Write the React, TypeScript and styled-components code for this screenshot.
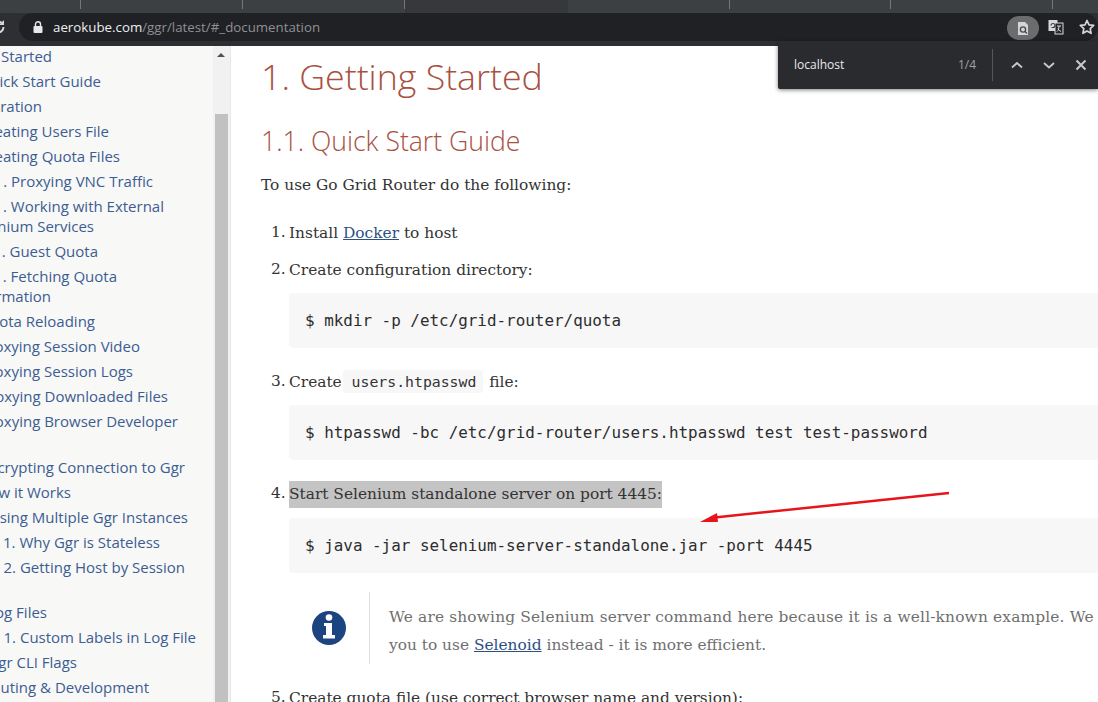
import React from 'react'
import styled, { createGlobalStyle } from 'styled-components'

const GlobalStyle = createGlobalStyle`
  html, body {
    margin: 0;
    height: 100%;
    overflow: hidden;
    background: #fff;
  }
`

const Page = styled.div`
  position: relative;
  width: 1098px;
  height: 702px;
  overflow: hidden;
  display: flex;
  flex-direction: column;
`

const TabStrip = styled.div`
  height: 13px;
  background: #3d4043;
  display: flex;
`

const TabSlot = styled.div<{ $w: number; $active?: boolean }>`
  width: ${p => p.$w}px;
  flex: none;
  box-sizing: border-box;
  background: ${p => (p.$active ? '#36383b' : 'transparent')};
  border-right: 1px solid ${p => (p.$active ? 'transparent' : '#74767a')};
  height: ${p => (p.$active ? 13 : 9)}px;
`

const Toolbar = styled.div`
  height: 33px;
  background: #2e2f32;
  position: relative;
  display: flex;
  align-items: flex-start;
`

const ReloadClip = styled.div`
  width: 6px;
  height: 28px;
  overflow: hidden;
  display: flex;
  align-items: center;
  color: #d6d7d9;
  flex: none;
`

const UrlPill = styled.div`
  margin-left: 13px;
  width: 1096px;
  height: 28px;
  border-radius: 14px;
  background: #202124;
  display: flex;
  align-items: center;
  padding-left: 14px;
  font: 13.3px 'Open Sans', sans-serif;
  color: #8e9094;
`

const Host = styled.span`
  color: #eceef0;
  margin-left: 10px;
`

const ToolIcons = styled.div`
  position: absolute;
  top: 0;
  right: 0;
  height: 28px;
  display: flex;
  align-items: center;
  gap: 9px;
  padding-right: 3px;
`

const PagePill = styled.div`
  width: 32px;
  height: 24px;
  margin-top: 2px;
  border-radius: 12px;
  background: #6a6c6e;
  display: flex;
  align-items: center;
  justify-content: center;
`

const Main = styled.div`
  flex: 1;
  display: flex;
  min-height: 0;
`

const Sidebar = styled.nav`
  width: 213px;
  flex: none;
  background: #f8f8f7;
  overflow: hidden;
  font: 15px/20px 'Open Sans', sans-serif;
  color: #3c5d92;
`

// the nav is scrolled sideways in the picture, so rows are cut on their left
const TocRow = styled.div<{ $end: number; $gap?: number }>`
  width: ${p => p.$end}px;
  display: flex;
  justify-content: flex-end;
  overflow: hidden;
  margin-bottom: ${p => p.$gap ?? 5}px;
  white-space: nowrap;
`

const ScrollTrack = styled.div`
  width: 17px;
  flex: none;
  background: #f1f1f1;
  position: relative;
`

const ScrollArrow = styled.div`
  position: absolute;
  top: 7px;
  left: 4px;
  border-left: 4px solid transparent;
  border-right: 4px solid transparent;
  border-bottom: 4px solid #505050;
`

const ScrollThumb = styled.div`
  position: absolute;
  top: 68px;
  left: 2px;
  right: 2px;
  bottom: 0;
  background: #c1c1c1;
`

const Content = styled.main`
  flex: 1;
  min-width: 0;
  border-left: 1px solid #e7e7e7;
  padding: 0 0 0 30px;
  overflow: hidden;
  font: 15.4px/25px 'DejaVu Serif', serif;
  color: #333;
`

const Title = styled.h1`
  font: 300 35.750px/44px 'Open Sans', sans-serif;
  color: #a8513f;
  margin: 8px 0 0;
`

const Subtitle = styled.h2`
  font: 300 26.600px/34px 'Open Sans', sans-serif;
  color: #a8513f;
  margin: 26px 0 0;
`

const Para = styled.p`
  margin: 15px 0 0;
  white-space: nowrap;
`

const Steps = styled.ol`
  list-style: none;
  margin: 22px 0 0;
  padding: 0;
`

const Step = styled.li<{ $gap?: number }>`
  display: grid;
  grid-template-columns: 28px 1fr;
  margin-top: ${p => p.$gap ?? 0}px;
`

const StepNo = styled.span`
  padding-left: 10px;
`

const StepBody = styled.div`
  white-space: nowrap;
  min-width: 0;
`

const StepLine = styled.div`
  line-height: 26px;
`

const Link = styled.a`
  color: #2b5082;
  text-decoration: underline;
`

const InlineCode = styled.code`
  font: 14.8px 'DejaVu Sans Mono', monospace;
  background: #f7f7f8;
  border-radius: 3px;
  padding: 3px 7px 3px 9px;
  margin: 0 1px 0 -4px;
  color: #333;
`

const Highlight = styled.span`
  display: inline-block;
  line-height: 27px;
  background: #c4c4c4;
`

const CodeBlock = styled.pre`
  margin: 10px 0 0;
  height: 55px;
  width: 860px;
  box-sizing: border-box;
  background: #f7f7f8;
  border-radius: 4px;
  padding: 0 16px;
  display: flex;
  align-items: center;
  font: 15.92px 'DejaVu Sans Mono', monospace;
  color: #2d2d2d;
`

const Note = styled.div`
  display: flex;
  margin: 19px 0 0;
  height: 72px;
`

const NoteIcon = styled.div`
  width: 80px;
  flex: none;
  display: flex;
  align-items: center;
  justify-content: center;
  border-right: 1px solid #dfdfdf;
`

const NoteText = styled.div`
  padding-left: 19px;
  padding-top: 11px;
  color: #6f6f6f;
  line-height: 28px;
  white-space: nowrap;
`

const NoteLead = styled.span`
  letter-spacing: 0.16px;
`

const FindBar = styled.div`
  position: absolute;
  top: 41px;
  right: 0;
  width: 320px;
  height: 48px;
  background: #2a2b2e;
  box-shadow: 0 1px 4px rgba(0, 0, 0, 0.5);
  display: flex;
  align-items: center;
  font: 12px 'Open Sans', sans-serif;
  color: #e8e9eb;
  border-radius: 0 0 0 2px;
`

const FindQuery = styled.span`
  margin-left: 16px;
  margin-top: -2px;
  flex: 1;
`

const FindCount = styled.span`
  color: #a0a2a5;
  margin-right: 16px;
  margin-top: -2px;
`

const FindDivider = styled.div`
  width: 1px;
  height: 32px;
  background: #55575a;
  margin-right: 15px;
`

const FindButtons = styled.div`
  display: flex;
  gap: 14px;
  margin-right: 8px;
  color: #c8c9cb;
`

const ArrowOverlay = styled.svg`
  position: absolute;
  left: 690px;
  top: 485px;
`

const tabs = [81, 162, 162, 163, 162, 161, 162]

const toc: { text: string; end: number; gap?: number }[] = [
  { text: 'Started', end: 52 },
  { text: 'ick Start Guide', end: 101 },
  { text: 'ration', end: 42 },
  { text: 'eating Users File', end: 109 },
  { text: 'eating Quota Files', end: 120 },
  { text: '. Proxying VNC Traffic', end: 153 },
  { text: '. Working with External', end: 164, gap: 0 },
  { text: 'nium Services', end: 94 },
  { text: '. Guest Quota', end: 98 },
  { text: '. Fetching Quota', end: 117, gap: 0 },
  { text: 'rmation', end: 51 },
  { text: 'ota Reloading', end: 95 },
  { text: 'oxying Session Video', end: 140 },
  { text: 'oxying Session Logs', end: 133 },
  { text: 'oxying Downloaded Files', end: 168 },
  { text: 'oxying Browser Developer', end: 178, gap: 26 },
  { text: 'crypting Connection to Ggr', end: 185 },
  { text: 'w it Works', end: 71 },
  { text: 'sing Multiple Ggr Instances', end: 188 },
  { text: '1. Why Ggr is Stateless', end: 160 },
  { text: '2. Getting Host by Session', end: 185, gap: 25 },
  { text: 'og Files', end: 47 },
  { text: '1. Custom Labels in Log File', end: 196 },
  { text: 'gr CLI Flags', end: 77 },
  { text: 'uting & Development', end: 149 },
]

const InfoIcon = () => (
  <svg width="36" height="36" viewBox="0 0 36 36">
    <circle cx="18" cy="18" r="17" fill="#1c4480" />
    <circle cx="18" cy="7.500" r="3.300" fill="#fff" />
    <path d="M13 13h8v12h3v3.500H12V25h3v-9h-2z" fill="#fff" />
  </svg>
)

export default function App() {
  return (
    <Page>
      <GlobalStyle />
      <TabStrip>
        {tabs.map((w, i) => (
          <TabSlot key={i} $w={w} $active={i === 3} />
        ))}
      </TabStrip>
      <Toolbar>
        <ReloadClip>
          <svg width="16" height="16" viewBox="0 0 16 16" style={{ marginLeft: -10, flex: 'none' }}>
            <path d="M13.500 8a5.500 5.500 0 1 1-1.600-3.900" fill="none" stroke="currentColor" strokeWidth="2" />
            <path d="M14 1v5H9z" fill="currentColor" />
          </svg>
        </ReloadClip>
        <UrlPill>
          <svg width="10" height="12" viewBox="0 0 10 12">
            <path d="M2.500 5V3.300a2.500 2.500 0 0 1 5 0V5" fill="none" stroke="#e8e8e8" strokeWidth="1.400" />
            <rect x="0.500" y="5" width="9" height="7" rx="1" fill="#e8e8e8" />
          </svg>
          <Host>aerokube.com</Host>/ggr/latest/#_documentation
        </UrlPill>
        <ToolIcons>
          <PagePill>
            <svg width="12" height="15" viewBox="0 0 12 15">
              <path d="M1 1h7l3 3v10H1z" fill="#d4d5d6" />
              <circle cx="6" cy="8.500" r="2.600" fill="none" stroke="#4a4c4f" strokeWidth="1.400" />
              <path d="M8 10.500l2 2" stroke="#4a4c4f" strokeWidth="1.400" />
            </svg>
          </PagePill>
          <svg width="16" height="16" viewBox="0 0 16 16">
            <rect x="0.500" y="1" width="9" height="11" fill="#d8d9da" />
            <rect x="7" y="4" width="8" height="11" fill="#26272a" stroke="#d8d9da" />
            <path d="M3 6.500a2 2 0 1 1 2 2H3.500" stroke="#3a3c3f" strokeWidth="1.200" fill="none" />
            <path d="M9 7h4M11 7c0 3-.8 4.500-2 5.500M9.800 9.500c.8 1.300 1.700 2.300 3.200 3" stroke="#d8d9da" fill="none" />
          </svg>
          <svg width="16" height="16" viewBox="0 0 16 16" style={{ marginLeft: 6 }}>
            <path d="M8 1.500l2 4.300 4.700.6-3.500 3.200.9 4.700L8 12l-4.100 2.300.9-4.700-3.500-3.200 4.700-.6z" fill="none" stroke="#d6d7d9" strokeWidth="1.700" strokeLinejoin="round" />
          </svg>
        </ToolIcons>
      </Toolbar>
      <Main>
        <Sidebar>
          {toc.map(row => (
            <TocRow key={row.text} $end={row.end} $gap={row.gap}>
              {row.text}
            </TocRow>
          ))}
        </Sidebar>
        <ScrollTrack>
          <ScrollArrow />
          <ScrollThumb />
        </ScrollTrack>
        <Content>
          <Title>1. Getting Started</Title>
          <Subtitle>1.1. Quick Start Guide</Subtitle>
          <Para>To use Go Grid Router do the following:</Para>
          <Steps>
            <Step>
              <StepNo>1.</StepNo>
              <StepBody>
                <StepLine>Install <Link>Docker</Link> to host</StepLine>
              </StepBody>
            </Step>
            <Step $gap={11}>
              <StepNo>2.</StepNo>
              <StepBody>
                <StepLine>Create configuration directory:</StepLine>
                <CodeBlock>$ mkdir -p /etc/grid-router/quota</CodeBlock>
              </StepBody>
            </Step>
            <Step $gap={21}>
              <StepNo>3.</StepNo>
              <StepBody>
                <StepLine>Create <InlineCode>users.htpasswd</InlineCode> file:</StepLine>
                <CodeBlock>$ htpasswd -bc /etc/grid-router/users.htpasswd test test-password</CodeBlock>
              </StepBody>
            </Step>
            <Step $gap={21}>
              <StepNo>4.</StepNo>
              <StepBody>
                <StepLine><Highlight>Start Selenium standalone server on port 4445:</Highlight></StepLine>
                <CodeBlock>$ java -jar selenium-server-standalone.jar -port 4445</CodeBlock>
                <Note>
                  <NoteIcon><InfoIcon /></NoteIcon>
                  <NoteText>
                    <NoteLead>We are showing Selenium server command here because it is a well-known example. We</NoteLead>
                    <br />
                    you to use <Link>Selenoid</Link> instead - it is more efficient.
                  </NoteText>
                </Note>
              </StepBody>
            </Step>
            <Step $gap={21}>
              <StepNo>5.</StepNo>
              <StepBody>
                <StepLine>Create quota file (use correct browser name and version):</StepLine>
              </StepBody>
            </Step>
          </Steps>
        </Content>
      </Main>
      <FindBar>
        <FindQuery>localhost</FindQuery>
        <FindCount>1/4</FindCount>
        <FindDivider />
        <FindButtons>
          <svg width="18" height="18" viewBox="0 0 18 18"><path d="M4 11.500L9 7l5 4.500" fill="none" stroke="currentColor" strokeWidth="1.800" /></svg>
          <svg width="18" height="18" viewBox="0 0 18 18"><path d="M4 7l5 4.500L14 7" fill="none" stroke="currentColor" strokeWidth="1.800" /></svg>
          <svg width="18" height="18" viewBox="0 0 18 18"><path d="M4.500 4.500l9 9M13.500 4.500l-9 9" fill="none" stroke="currentColor" strokeWidth="2" /></svg>
        </FindButtons>
      </FindBar>
      <ArrowOverlay width="270" height="45" viewBox="0 0 270 45">
        <path d="M259 8L20 33" stroke="#e8141c" strokeWidth="2.500" fill="none" />
        <path d="M10 37l17-9 1 9z" fill="#e8141c" />
      </ArrowOverlay>
    </Page>
  )
}
